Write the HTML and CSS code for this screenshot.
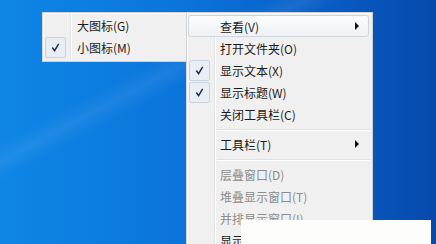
FILE: index.html
```html
<!DOCTYPE html>
<html lang="zh-CN">
<head>
    <meta charset="UTF-8">
    <title>工具栏菜单</title>
    <link rel="stylesheet" href="styles.css">
</head>
<body>

<div id="desktop">
    <!-- Untermenu: Ansicht -->
    <div class="menu sub">
        <div class="item"><span class="mark"></span><span class="label">大图标(G)</span></div>
        <div class="item"><span class="mark on"><svg viewBox="0 0 21 21"><path d="M7 10.5 L9.5 14 L14 6.5"/></svg></span><span class="label">小图标(M)</span></div>
    </div>

    <!-- Hauptmenu -->
    <div class="menu main">
        <div class="item hover"><span class="mark"></span><span class="label">查看(V)</span><span class="arrow"></span></div>
        <div class="item"><span class="mark"></span><span class="label">打开文件夹(O)</span></div>
        <div class="item"><span class="mark on"><svg viewBox="0 0 21 21"><path d="M7 10.5 L9.5 14 L14 6.5"/></svg></span><span class="label">显示文本(X)</span></div>
        <div class="item"><span class="mark on"><svg viewBox="0 0 21 21"><path d="M7 10.5 L9.5 14 L14 6.5"/></svg></span><span class="label">显示标题(W)</span></div>
        <div class="item"><span class="mark"></span><span class="label">关闭工具栏(C)</span></div>
        <div class="sep"></div>
        <div class="item"><span class="mark"></span><span class="label">工具栏(T)</span><span class="arrow"></span></div>
        <div class="sep"></div>
        <div class="item off"><span class="mark"></span><span class="label">层叠窗口(D)</span></div>
        <div class="item off"><span class="mark"></span><span class="label">堆叠显示窗口(T)</span></div>
        <div class="item off"><span class="mark"></span><span class="label">并排显示窗口(I)</span></div>
        <div class="item"><span class="mark"></span><span class="label">显示桌面(S)</span></div>
    </div>

    <div class="cover"></div>
</div>

</body>
</html>
```

FILE: styles.css
```css
html, body {
    margin: 0;
    padding: 0;
    width: 100%;
    height: 100%;
    overflow: hidden;
    font-family: "Noto Sans CJK SC", "Liberation Sans", sans-serif;
    font-size: 12px;
    color: #1b1b1b;
}

#desktop {
    position: relative;
    width: 436px;
    height: 244px;
    overflow: hidden;
    background:
        linear-gradient(-28deg, rgba(255,255,255,0) 62%, rgba(255,255,255,0.07) 66%, rgba(255,255,255,0) 70%),
        linear-gradient(to right, #0f86e6 0%, #0b75dc 40%, #095fc6 72%, #0749ac 100%);
}

.menu {
    position: absolute;
    box-sizing: border-box;
    background: #f0f0f0;
    border: 1px solid #d2d2d2;
    box-shadow: inset 1px 1px 0 #fbfbfb;
    padding: 1px;
}

/* senkrechte Trennlinie */
.menu::before {
    content: "";
    position: absolute;
    top: 1px;
    bottom: 1px;
    left: 27px;
    width: 1px;
    background: #e2e3e3;
    box-shadow: 1px 0 0 #ffffff;
}

.sub {
    left: 42px;
    top: 12px;
    width: 145px;
    height: 50px;
}

.main {
    left: 186px;
    top: 12px;
    width: 187px;
    height: 260px;
}

.item {
    position: relative;
    display: flex;
    align-items: center;
    height: 22px;
}

.main .item:first-child {
    margin-top: 1px;
}

.mark {
    box-sizing: border-box;
    width: 21px;
    height: 21px;
    margin-left: 1px;
    margin-right: 10px;
    border-radius: 2px;
}

.sub .mark {
    margin-right: 11px;
}

.mark.on {
    border: 1px solid #c9d3de;
    background: #e9eef4;
}

.mark svg {
    display: block;
    width: 19px;
    height: 19px;
}

.mark svg path {
    fill: none;
    stroke: #1c2a4a;
    stroke-width: 1.6;
}

.label {
    flex: 1;
    white-space: nowrap;
    position: relative;
}

.off .label {
    color: #8c8c8c;
}

.hover::before {
    content: "";
    position: absolute;
    left: 0;
    right: 2px;
    top: 0;
    bottom: 0;
    border: 1px solid #cdd5de;
    border-radius: 3px;
    background: linear-gradient(#fbfcfd, #eef1f5);
}

.hover .mark {
    position: relative;
}

.arrow {
    position: relative;
    width: 0;
    height: 0;
    margin-right: 12px;
    border-left: 4px solid #111;
    border-top: 4px solid transparent;
    border-bottom: 4px solid transparent;
}

.sep {
    height: 8px;
    display: flex;
    align-items: center;
    padding-left: 29px;
}

.sep::after {
    content: "";
    flex: 1;
    height: 1px;
    background: #e0e0e0;
    box-shadow: 0 1px 0 #ffffff;
    margin-right: 1px;
}

.cover {
    position: absolute;
    left: 241px;
    top: 220px;
    width: 190px;
    height: 30px;
    background: #fdfdfc;
}
```
